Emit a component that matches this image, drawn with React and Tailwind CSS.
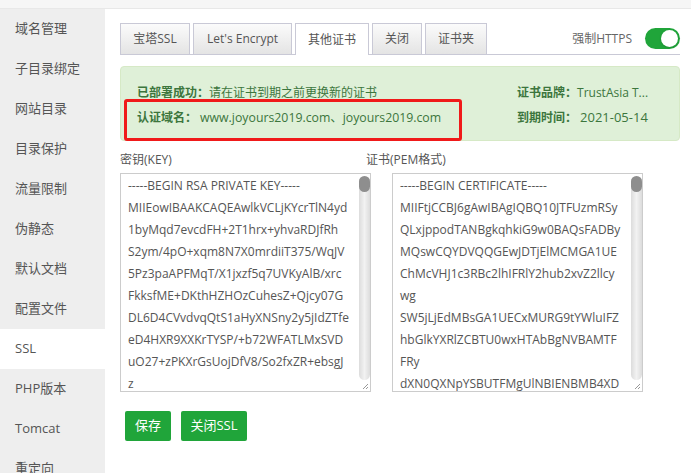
import React from "react";

const FONT = { fontFamily: '"Open Sans", "Noto Sans CJK SC", sans-serif' };

const menu = ["域名管理", "子目录绑定", "网站目录", "目录保护", "流量限制", "伪静态", "默认文档", "配置文件", "SSL", "PHP版本", "Tomcat", "重定向"];

const keyLines = [
  "-----BEGIN RSA PRIVATE KEY-----",
  "MIIEowIBAAKCAQEAwlkVCLjKYcrTlN4yd",
  "1byMqd7evcdFH+2T1hrx+yhvaRDJfRh",
  "S2ym/4pO+xqm8N7X0mrdiiT375/WqJV",
  "5Pz3paAPFMqT/X1jxzf5q7UVKyAlB/xrc",
  "FkksfME+DKthHZHOzCuhesZ+Qjcy07G",
  "DL6D4CVvdvqQtS1aHyXNSny2y5jIdZTfe",
  "eD4HXR9XXKrTYSP/+b72WFATLMxSVD",
  "uO27+zPKXrGsUojDfV8/So2fxZR+ebsgJ",
  "z",
];

const certLines = [
  "-----BEGIN CERTIFICATE-----",
  "MIIFtjCCBJ6gAwIBAgIQBQ10JTFUzmRSy",
  "QLxjppodTANBgkqhkiG9w0BAQsFADBy",
  "MQswCQYDVQQGEwJDTjElMCMGA1UE",
  "ChMcVHJ1c3RBc2lhIFRlY2hub2xvZ2llcy",
  "wg",
  "SW5jLjEdMBsGA1UECxMURG9tYWluIFZ",
  "hbGlkYXRlZCBTU0wxHTAbBgNVBAMTF",
  "FRy",
  "dXN0QXNpYSBUTFMgUlNBIENBMB4XD",
];

function TextBox({ lines }) {
  return (
    <div className="flex w-[251px] h-[219px] border border-[#cccccc] bg-white overflow-hidden">
      <div className="flex-1 overflow-hidden pl-[7px] pt-[1px] text-[12px] leading-[22px] text-[#555]">
        {lines.map((l, i) => (
          <div key={i} className="whitespace-nowrap">{l}</div>
        ))}
      </div>
      <div className="w-[11px] flex flex-col">
        <div className="flex-1 mt-[2px] rounded-full bg-gradient-to-r from-[#dcdcdc] via-[#f2f2f2] to-[#dcdcdc] flex flex-col">
          <div className="h-[16px] rounded-full bg-[#8e8e8e]" />
        </div>
        <div className="h-[11px] flex items-end justify-end pr-[1px] pb-[1px]">
          <svg width="7" height="7" viewBox="0 0 7 7">
            <path d="M6 1 L1 6 M6 4 L4 6" stroke="#999" strokeWidth="1" />
          </svg>
        </div>
      </div>
    </div>
  );
}

export default function App() {
  const tabs = [
    { t: "宝塔SSL", w: "w-[70px]" },
    { t: "Let's Encrypt", w: "w-[99px]" },
    { t: "其他证书", w: "w-[74px]", active: true },
    { t: "关闭", w: "w-[50px]" },
    { t: "证书夹", w: "w-[62px]" },
  ];
  return (
    <div style={FONT} className="w-[691px] h-[473px] overflow-hidden flex flex-col bg-white">
      <div className="h-[9px] shrink-0 bg-[#f6f6f6] border-b border-[#e8e8e8]" />
      <div className="flex flex-1 min-h-0">
        <div className="w-[105px] shrink-0 bg-[#eeeeee] flex flex-col">
          {menu.map((m) => (
            <div
              key={m}
              className={`h-[40px] shrink-0 flex items-center pl-[15px] text-[13px] text-[#555] ${m === "SSL" ? "bg-white" : ""}`}
            >
              {m}
            </div>
          ))}
        </div>
        <div className="flex-1 pl-[15px] pr-[11px] pt-[15px] flex flex-col">
          <div className="flex items-end h-[31px] border-b border-[#c9c9d6]">
            {tabs.map((tab) => (
              <div
                key={tab.t}
                className={`${tab.w} mr-[3px] flex items-center justify-center text-[12px] text-[#555] border border-b-0 border-[#c9c9d6] ${
                  tab.active ? "h-[32px] -mb-px bg-white" : "h-[31px] bg-gradient-to-b from-[#fbfbfb] to-[#e4e4e4]"
                }`}
              >
                {tab.t}
              </div>
            ))}
            <div className="ml-auto self-stretch flex items-center pb-[1px]">
              <span className="text-[12px] text-[#666] mr-[13px]">强制HTTPS</span>
              <div className="w-[35px] h-[21px] rounded-full bg-[#20a53a] flex items-center justify-end pr-[2px]">
                <div className="w-[17px] h-[17px] rounded-full bg-white shadow-sm" />
              </div>
            </div>
          </div>

          <div className="relative mt-[11px] h-[75px] rounded-[4px] border border-[#d6e9c6] bg-[#dff0d8] text-[#3c763d] text-[12px] flex flex-col pt-[16px] pl-[16px] gap-[5px]">
            <div className="flex h-[20px] items-center">
              <div className="w-[380px]">
                <b className="font-bold">已部署成功：</b>请在证书到期之前更换新的证书
              </div>
              <div>
                <b className="font-bold">证书品牌：</b>TrustAsia T...
              </div>
            </div>
            <div className="flex h-[20px] items-center">
              <div className="w-[380px] flex items-center">
                <b className="font-bold">认证域名：</b>
                <span className="ml-[3px] text-[12.3px]">www.joyours2019.com、joyours2019.com</span>
              </div>
              <div className="flex items-center">
                <b className="font-bold">到期时间：</b>
                <span className="ml-[3px] text-[13px]">2021-05-14</span>
              </div>
            </div>
            <div className="absolute left-[3px] top-[32px] w-[338px] h-[42px] border-[3px] border-[#f01a1a] rounded-[3px]" />
          </div>

          <div className="flex mt-[10px]">
            <div className="w-[246px] shrink-0">
              <div className="h-[22px] text-[12px] text-[#555] leading-[18px]">密钥(KEY)</div>
              <TextBox lines={keyLines} />
            </div>
            <div className="flex-1">
              <div className="h-[22px] text-[12px] text-[#555] leading-[18px]">证书(PEM格式)</div>
              <div className="ml-[26px]">
                <TextBox lines={certLines} />
              </div>
            </div>
          </div>

          <div className="flex gap-[10px] mt-[19px] ml-[5px]">
            <div className="w-[46px] h-[30px] rounded-[2px] bg-[#20a53a] text-white text-[13px] flex items-center justify-center">保存</div>
            <div className="w-[66px] h-[30px] rounded-[2px] bg-[#20a53a] text-white text-[13px] flex items-center justify-center">关闭SSL</div>
          </div>
        </div>
      </div>
    </div>
  );
}
